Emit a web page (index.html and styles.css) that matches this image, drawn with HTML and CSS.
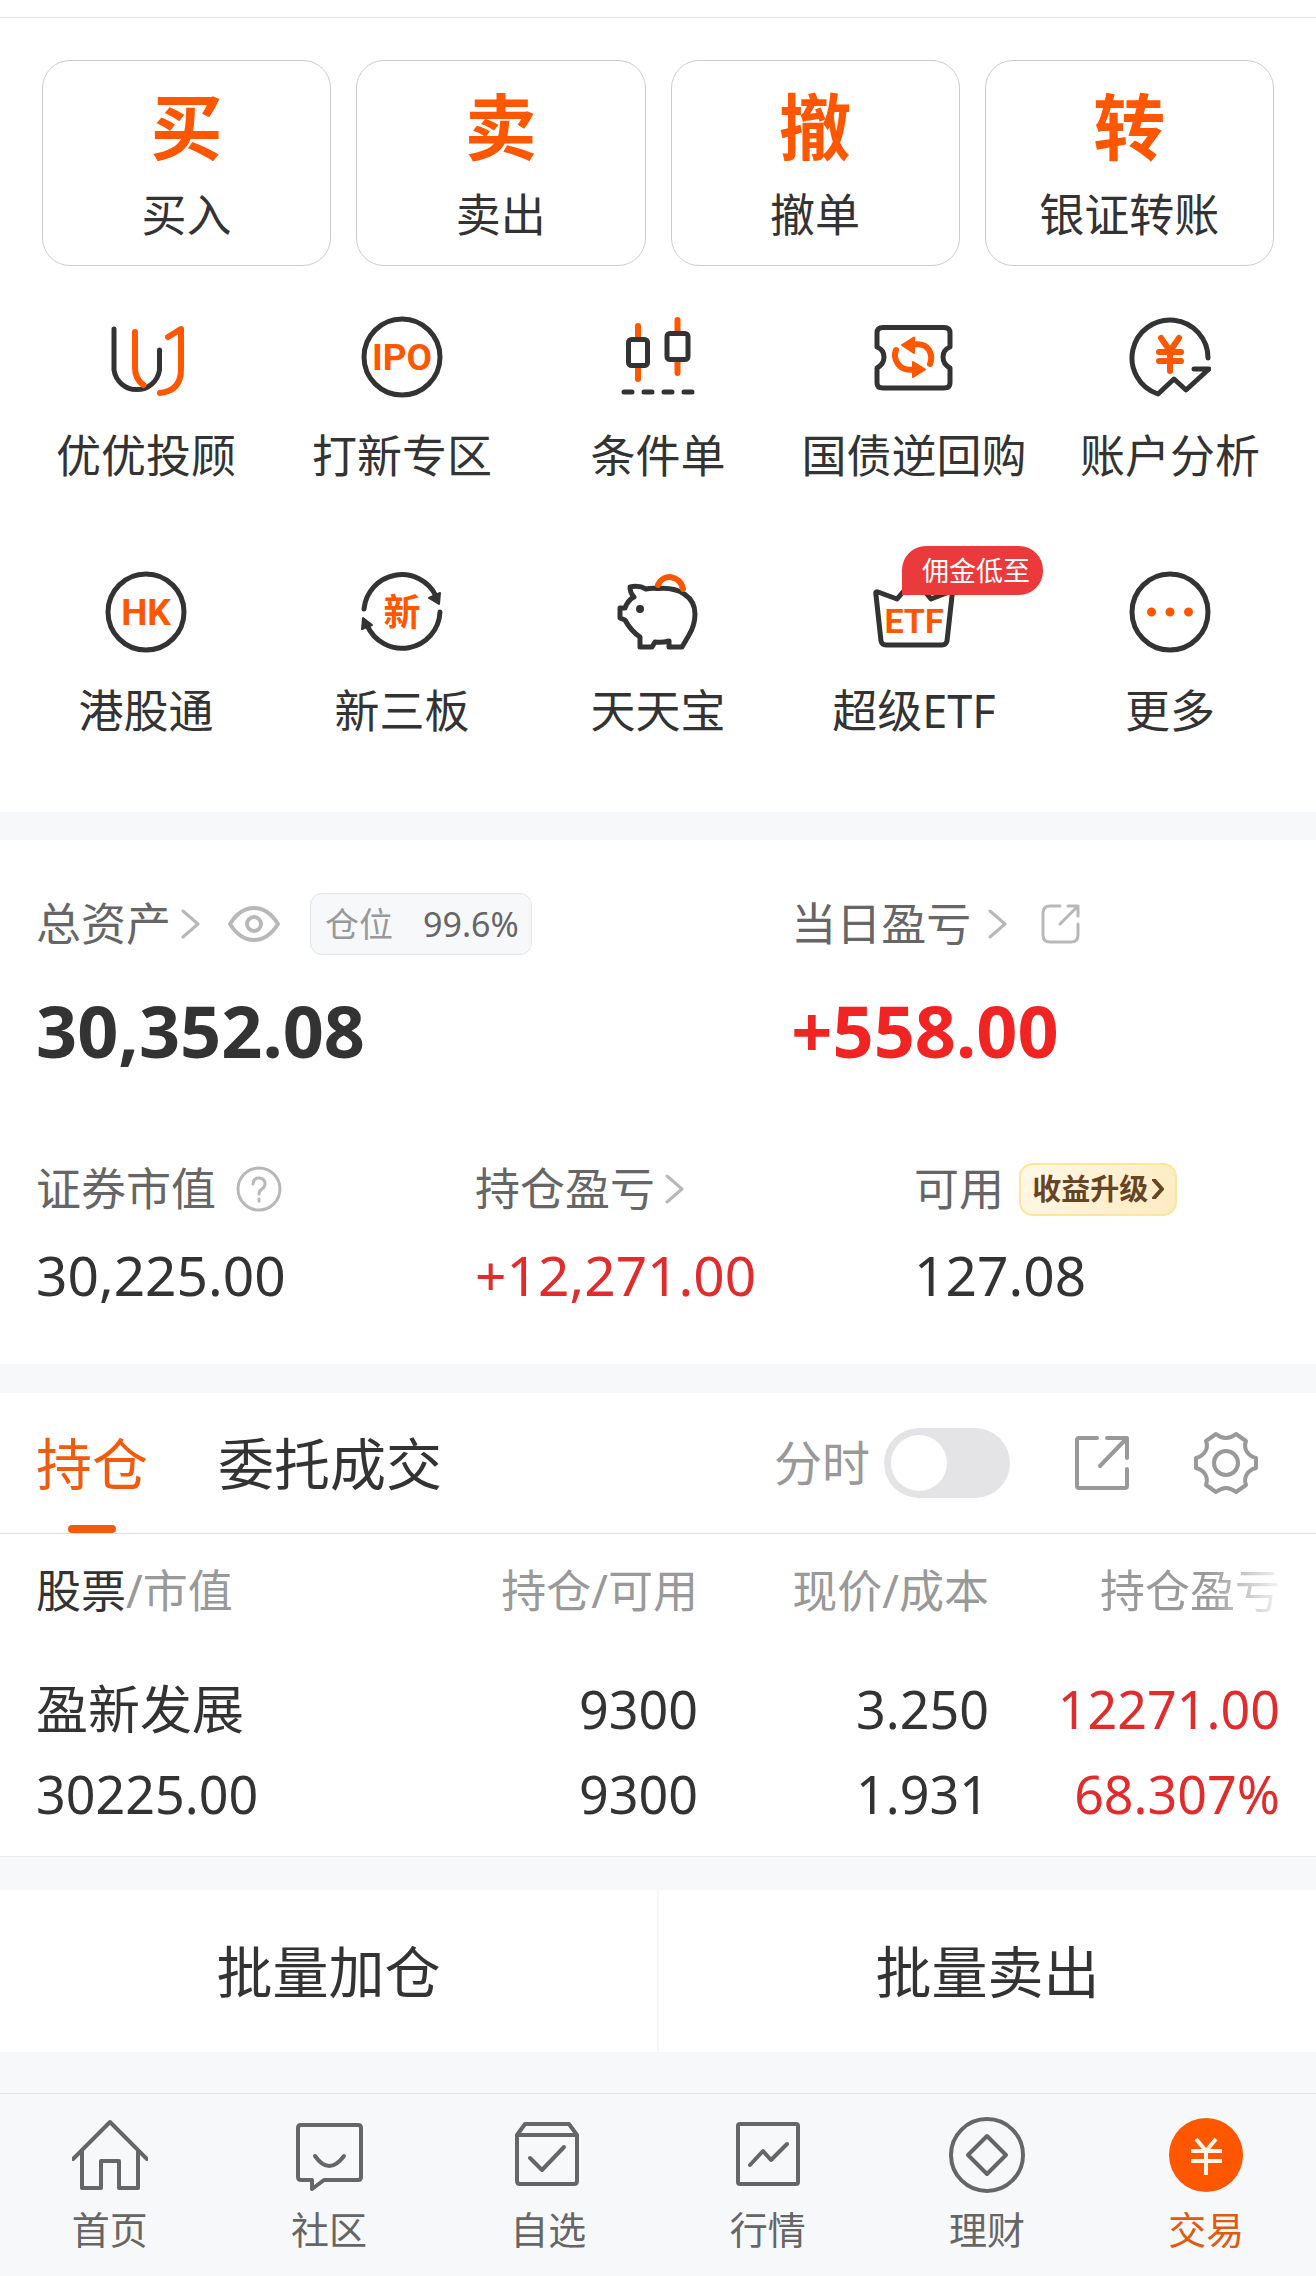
FILE: index.html
```html
<!DOCTYPE html>
<html lang="zh-CN">
<head>
    <meta charset="UTF-8">
    <meta name="viewport" content="width=device-width, initial-scale=1.0">
    <title>交易</title>
    <link rel="stylesheet" href="styles.css">
</head>
<body>

    <div class="topbar"></div>

    <section class="panel">
        <div class="actions">
            <button class="action"><span class="action-char">买</span><span>买入</span></button>
            <button class="action"><span class="action-char">卖</span><span>卖出</span></button>
            <button class="action"><span class="action-char">撤</span><span>撤单</span></button>
            <button class="action"><span class="action-char">转</span><span>银证转账</span></button>
        </div>

        <div class="services">
            <a class="service" href="#">
                <svg class="icon" viewBox="0 0 82 82">
                    <path d="M9 13V54A23 23 0 0 0 54.5 54V34"/>
                    <path class="hot" d="M30 16V52Q30 63 38.5 69M55 77Q76 75 76 53V13L63 21"/>
                </svg>
                <span>优优投顾</span>
            </a>
            <a class="service" href="#">
                <svg class="icon" viewBox="0 0 82 82">
                    <circle cx="41" cy="41" r="38"/>
                    <text class="icon-text" x="41" y="54">IPO</text>
                </svg>
                <span>打新专区</span>
            </a>
            <a class="service" href="#">
                <svg class="icon" viewBox="0 0 82 82">
                    <path class="hot" d="M21 10V22M21 52V63M60.500 4V16M60.500 45V57"/>
                    <rect x="11.500" y="23.500" width="19" height="26" rx="3"/>
                    <rect x="50" y="17.500" width="21" height="26" rx="3"/>
                    <path d="M7 76H15M27 76H35M47 76H55M67 76H75"/>
                </svg>
                <span>条件单</span>
            </a>
            <a class="service" href="#">
                <svg class="icon" viewBox="0 0 82 82">
                    <path d="M10 11.500H71Q77 11.500 77 17V31Q70 34 70 41T77 52V67Q77 72 71 72H10Q4 72 4 67V52Q11 48 11 41T4 31V17Q4 11.500 10 11.500Z"/>
                    <path class="hot" d="M23 34Q20 41 25 48T41 53.500M57 48Q60 41 56 34T40 28.500"/>
                    <path class="hot-fill" d="M40 46L52 53.500L40 61ZM41 21.500L29 29L41 37Z"/>
                </svg>
                <span>国债逆回购</span>
            </a>
            <a class="service" href="#">
                <svg class="icon" viewBox="0 0 82 82">
                    <path d="M79 42A38 38 0 1 0 29 78L45 63L57 74L80 53H65"/>
                    <path class="hot" d="M32 22L41 35L50 22M41 35V55M30 36H52M30 45H52"/>
                </svg>
                <span>账户分析</span>
            </a>
            <a class="service" href="#">
                <svg class="icon" viewBox="0 0 82 82">
                    <circle cx="41" cy="41" r="38"/>
                    <text class="icon-text" x="41" y="54">HK</text>
                </svg>
                <span>港股通</span>
            </a>
            <a class="service" href="#">
                <svg class="icon" viewBox="0 0 82 82">
                    <path d="M3 38A38 38 0 0 1 75 25M79 41A38 38 0 0 1 6 54"/>
                    <path class="dark-fill" d="M68 27L79 22L78 33ZM2 47L1 58L11 54Z"/>
                    <text class="icon-text" x="41" y="55">新</text>
                </svg>
                <span>新三板</span>
            </a>
            <a class="service" href="#">
                <svg class="icon" viewBox="0 0 82 82">
                    <path d="M13 16Q22 14 29 18Q34 17 41 17.500C63 16 78 26 78 43Q78 54 72 64L65 76H52V70Q45 72 38 71L35 76H23V66Q14 60 8 49L3 47V37H8Q11 29 17 26Q13 22 13 16Z"/>
                    <circle class="dark-fill" cx="23" cy="38" r="3"/>
                    <path class="hot" d="M41 14C46 2 63 4 66 18"/>
                </svg>
                <span>天天宝</span>
            </a>
            <a class="service" href="#">
                <svg class="icon" viewBox="0 0 82 82">
                    <path d="M5 21L24 28L41 8L58 28L76 21Q80 20 79 25L74 70Q73 74 69 74H13Q9 74 8 70L3 24Q2 20 5 21Z"/>
                    <text class="icon-text small" x="41" y="62">ETF</text>
                </svg>
                <span>超级ETF</span>
                <span class="badge">佣金低至</span>
            </a>
            <a class="service" href="#">
                <svg class="icon" viewBox="0 0 82 82">
                    <circle cx="41" cy="41" r="38"/>
                    <path class="hot dots" d="M22.500 41h.01M41 41h.01M59.500 41h.01"/>
                </svg>
                <span>更多</span>
            </a>
        </div>
    </section>

    <section class="panel assets">
        <div class="assets-main">
            <div>
                <div class="line">
                    <span>总资产</span>
                    <svg class="chevron near" viewBox="0 0 20 30"><path d="M2 2L17 15L2 28"/></svg>
                    <svg class="eye" viewBox="0 0 52 36">
                        <path d="M2 18Q12 2 26 2T50 18Q40 34 26 34T2 18Z"/>
                        <circle cx="26" cy="18" r="7"/>
                    </svg>
                    <span class="ratio"><span class="ratio-name">仓位</span>99.6%</span>
                </div>
                <div class="total">30,352.08</div>
            </div>
            <div>
                <div class="line">
                    <span>当日盈亏</span>
                    <svg class="chevron" viewBox="0 0 20 30"><path d="M2 2L17 15L2 28"/></svg>
                    <svg class="share-small" viewBox="0 0 40 40">
                        <path d="M19 2H9Q2 2 2 9V31Q2 38 9 38H30Q37 38 37 31V20M27 2H37V12M36 3L19 20"/>
                    </svg>
                </div>
                <div class="total up">+558.00</div>
            </div>
        </div>
        <div class="assets-sub">
            <div>
                <div class="line sub">
                    <span>证券市值</span>
                    <svg class="help" viewBox="0 0 46 46">
                        <circle cx="23" cy="23" r="21"/>
                        <path d="M17 18Q17 12 23 12T29 18Q29 21 26 23T23 28M23 33V35"/>
                    </svg>
                </div>
                <div class="value">30,225.00</div>
            </div>
            <div>
                <div class="line sub">
                    <span>持仓盈亏</span>
                    <svg class="chevron near" viewBox="0 0 20 30"><path d="M2 2L17 15L2 28"/></svg>
                </div>
                <div class="value up">+12,271.00</div>
            </div>
            <div>
                <div class="line sub">
                    <span>可用</span>
                    <a class="upgrade" href="#">收益升级
                        <svg viewBox="0 0 12 20"><path d="M2 1L10 10L2 19"/></svg>
                    </a>
                </div>
                <div class="value">127.08</div>
            </div>
        </div>
    </section>

    <section class="panel">
        <div class="tabs">
            <button class="tab active">持仓</button>
            <button class="tab">委托成交</button>
            <label class="switch"><span>分时</span><input type="checkbox"></label>
            <button class="tool" aria-label="分享">
                <svg class="share" viewBox="0 0 54 54">
                    <path d="M22 2H4Q2 2 2 4V50Q2 52 4 52H50Q52 52 52 50V33M32 2H52V22M51 3L25 30"/>
                </svg>
            </button>
            <button class="tool" aria-label="设置">
                <svg class="gear" viewBox="0 0 64 64">
                    <path d="M2 27C10 25 15 18 12 10L22 3Q32 11 42 3L52 10C49 18 54 25 62 27V37C54 39 49 46 52 54L42 61Q32 53 22 61L12 54C15 46 10 39 2 37Z"/>
                    <circle cx="32" cy="32" r="12"/>
                </svg>
            </button>
        </div>

        <table class="holdings">
            <thead>
                <tr>
                    <th><b>股票</b>/市值</th>
                    <th class="col-num">持仓/可用</th>
                    <th class="col-price">现价/成本</th>
                    <th class="col-price"><span class="fade">持仓盈亏</span></th>
                </tr>
            </thead>
            <tbody>
                <tr>
                    <td>盈新发展</td>
                    <td>9300</td>
                    <td>3.250</td>
                    <td class="up">12271.00</td>
                </tr>
                <tr>
                    <td>30225.00</td>
                    <td>9300</td>
                    <td>1.931</td>
                    <td class="up">68.307%</td>
                </tr>
            </tbody>
        </table>
    </section>

    <div class="batch">
        <button>批量加仓</button>
        <button>批量卖出</button>
    </div>

    <nav class="navbar">
        <a href="#">
            <svg viewBox="0 0 76 76"><path d="M1 42L38 5L75 42M10 34V71H29V44H47V71H66V34"/></svg>
            <span>首页</span>
        </a>
        <a href="#">
            <svg viewBox="0 0 76 76"><path d="M10 8H67Q70 8 70 11V60Q70 63 67 63H33L21 72V63H10Q7 63 7 60V11Q7 8 10 8ZM24 39Q38 59 53 39"/></svg>
            <span>社区</span>
        </a>
        <a href="#">
            <svg viewBox="0 0 76 76"><path d="M7 18L15 7H59L67 18V64Q67 67 64 67H10Q7 67 7 64ZM7 18H67M20 41L32 53L54 30"/></svg>
            <span>自选</span>
        </a>
        <a href="#">
            <svg viewBox="0 0 76 76"><rect x="8" y="7" width="60" height="60" rx="2"/><path d="M20 48L33 34L41 43L57 27"/></svg>
            <span>行情</span>
        </a>
        <a href="#">
            <svg viewBox="0 0 76 76"><circle cx="38" cy="38" r="36"/><path d="M38 19L57 38L38 57L19 38Z"/></svg>
            <span>理财</span>
        </a>
        <a class="current" href="#">
            <svg viewBox="0 0 76 76"><circle class="coin" cx="38" cy="38" r="37"/><path class="yuan" d="M28 22L38 34L48 22M38 34V58M23 34H54M23 44H54"/></svg>
            <span>交易</span>
        </a>
    </nav>

</body>
</html>
```
FILE: styles.css
```css
* {
    box-sizing: border-box;
}

body {
    margin: 0;
    background: #f7f8fa;
    color: #333;
    font-family: "Noto Sans", "Noto Sans CJK SC", sans-serif;
    font-size: 45px;
}

button {
    margin: 0;
    padding: 0;
    border: none;
    background: none;
    color: inherit;
    font: inherit;
    cursor: pointer;
}

a {
    color: inherit;
    text-decoration: none;
}

svg {
    display: block;
    flex: none;
    fill: none;
    stroke: #b8b8b8;
    stroke-width: 4;
    stroke-linecap: round;
    stroke-linejoin: round;
}

.topbar {
    height: 18px;
    background: white;
    border-bottom: 1px solid #e2e2e4;
}

.panel {
    background: white;
}

.up {
    color: #e02c2c;
}

/* buy / sell / cancel / transfer */
.actions {
    display: grid;
    grid-template-columns: repeat(4, 1fr);
    gap: 25px;
    padding: 42px 42px 0;
}

.action {
    display: flex;
    flex-direction: column;
    align-items: center;
    gap: 24px;
    padding: 25px 0;
    border: 1px solid #ccc;
    border-radius: 28px;
    line-height: 50px;
}

.action-char {
    color: #ff5700;
    font-size: 72px;
    font-weight: bold;
    line-height: 80px;
}

/* service grid */
.services {
    display: grid;
    grid-template-columns: repeat(5, 1fr);
    row-gap: 85px;
    padding: 50px 18px 71px;
}

.service {
    position: relative;
    display: flex;
    flex-direction: column;
    align-items: center;
    gap: 28px;
    line-height: 60px;
    white-space: nowrap;
}

.icon {
    width: 82px;
    height: 82px;
    stroke: #333;
    stroke-width: 5;
}

.icon .hot {
    stroke: #ff5700;
    stroke-width: 6;
}

.icon .dots {
    stroke-width: 9;
}

.icon .hot-fill {
    fill: #ff5700;
    stroke: #ff5700;
    stroke-width: 2;
}

.icon .dark-fill {
    fill: #333;
    stroke-width: 2;
}

.icon-text {
    fill: #ff5700;
    stroke: none;
    font-family: Roboto, "Noto Sans CJK SC", sans-serif;
    font-size: 37px;
    font-weight: bold;
    text-anchor: middle;
}

.icon-text.small {
    font-size: 34px;
}

.badge {
    position: absolute;
    top: -25px;
    left: 116px;
    padding: 0 13px 0 20px;
    border-radius: 24px 24px 24px 0;
    background: #ea3a3c;
    color: white;
    font-size: 27px;
    line-height: 49px;
}

/* account totals */
.assets {
    margin-top: 28px;
    padding: 52px 36px 53px;
}

.assets-main {
    display: grid;
    grid-template-columns: 17fr 11fr;
}

.assets-sub {
    display: grid;
    grid-template-columns: 12fr 12fr 10fr;
    margin-top: 89px;
}

.line {
    display: flex;
    align-items: center;
    height: 64px;
    color: #666;
    line-height: 60px;
    white-space: nowrap;
}

.line.sub {
    height: 60px;
}

.chevron {
    width: 20px;
    height: 30px;
    margin-left: 17px;
    stroke-width: 3;
}

.chevron.near {
    margin-left: 10px;
}

.eye {
    width: 52px;
    height: 36px;
    margin-left: 27px;
}

.ratio {
    display: flex;
    gap: 30px;
    margin-left: 30px;
    padding: 0 12px 0 14px;
    border: 1px solid #e4e4e8;
    border-radius: 12px;
    background: #f7f8fa;
    font-size: 34px;
}

.ratio-name {
    color: #999;
}

.total {
    margin-top: 34px;
    color: #333;
    font-size: 72px;
    font-weight: bold;
    line-height: 80px;
}

.total.up {
    color: #f12424;
}

.share-small {
    width: 40px;
    height: 40px;
    margin-left: 33px;
    stroke-width: 3;
}

.help {
    width: 46px;
    height: 46px;
    margin-left: 20px;
    stroke-width: 3;
}

.upgrade {
    display: flex;
    align-items: center;
    gap: 4px;
    height: 53px;
    margin-left: 15px;
    padding: 0 11px;
    border: 2px solid #fae79a;
    border-radius: 14px;
    background: linear-gradient(120deg, #fff8e6, #fdebc0);
    color: #654525;
    font-size: 29px;
    font-weight: bold;
}

.upgrade svg {
    width: 12px;
    height: 20px;
    stroke: #654525;
}

.value {
    margin-top: 20px;
    font-size: 55px;
    line-height: 72px;
}

/* holdings */
.tabs {
    display: flex;
    align-items: center;
    height: 141px;
    margin-top: 29px;
    padding: 0 58px 0 36px;
    border-bottom: 1px solid #e0e0e0;
    font-size: 56px;
}

.tab {
    position: relative;
    height: 140px;
    margin-right: 70px;
    padding-bottom: 6px;
    white-space: nowrap;
}

.tab.active {
    color: #f25a0e;
}

.tab.active::after {
    content: "";
    position: absolute;
    bottom: 0;
    left: 50%;
    width: 48px;
    height: 8px;
    margin-left: -24px;
    border-radius: 4px;
    background: #f25a0e;
}

.switch {
    display: flex;
    align-items: center;
    gap: 14px;
    margin-left: auto;
    color: #999;
    font-size: 48px;
}

.switch span {
    padding-bottom: 6px;
}

.switch input {
    appearance: none;
    width: 126px;
    height: 70px;
    margin: 0;
    padding: 7px;
    border-radius: 35px;
    background: #e4e4e7;
}

.switch input::before {
    content: "";
    display: block;
    width: 56px;
    height: 56px;
    border-radius: 50%;
    background: white;
}

.switch input:checked {
    background: #ff5700;
}

.switch input:checked::before {
    margin-left: auto;
}

.tool {
    margin-left: 65px;
}

.tool svg {
    stroke: #999;
    stroke-width: 4;
}

.share {
    width: 54px;
    height: 54px;
}

.gear {
    width: 64px;
    height: 64px;
}

.holdings {
    width: 100%;
    padding: 0 36px 20px;
    border-bottom: 1px solid #ebebed;
    border-spacing: 0;
    table-layout: fixed;
}

.holdings th {
    padding: 0 0 18px;
    color: #999;
    font-weight: normal;
    line-height: 114px;
    text-align: right;
    white-space: nowrap;
}

.holdings b {
    color: #333;
    font-weight: normal;
}

.holdings td {
    padding: 0;
    font-size: 52px;
    line-height: 85px;
    text-align: right;
}

.holdings th:first-child,
.holdings td:first-child {
    text-align: left;
}

.col-num {
    width: 324px;
}

.col-price {
    width: 291px;
}

.fade {
    background: linear-gradient(90deg, #999 60%, #f4f4f4);
    background-clip: text;
    color: transparent;
}

/* batch orders */
.batch {
    display: grid;
    grid-template-columns: 1fr 1fr;
    gap: 2px;
    margin: 33px 0 41px;
}

.batch button {
    background: white;
    font-size: 56px;
    line-height: 162px;
}

/* bottom navigation */
.navbar {
    display: grid;
    grid-template-columns: repeat(6, 1fr);
    padding: 23px 0 22px;
    border-top: 1px solid #e4e4e6;
    color: #666;
    font-size: 38px;
    line-height: 44px;
}

.navbar a {
    display: flex;
    flex-direction: column;
    align-items: center;
    gap: 14px;
}

.navbar svg {
    width: 76px;
    height: 76px;
    stroke: #666;
    stroke-width: 4;
}

.navbar .current {
    color: #e05a10;
}

.navbar .coin {
    fill: #ff5700;
    stroke: none;
}

.navbar .yuan {
    stroke: #fff5e8;
    stroke-width: 4;
    stroke-linecap: butt;
}
```
